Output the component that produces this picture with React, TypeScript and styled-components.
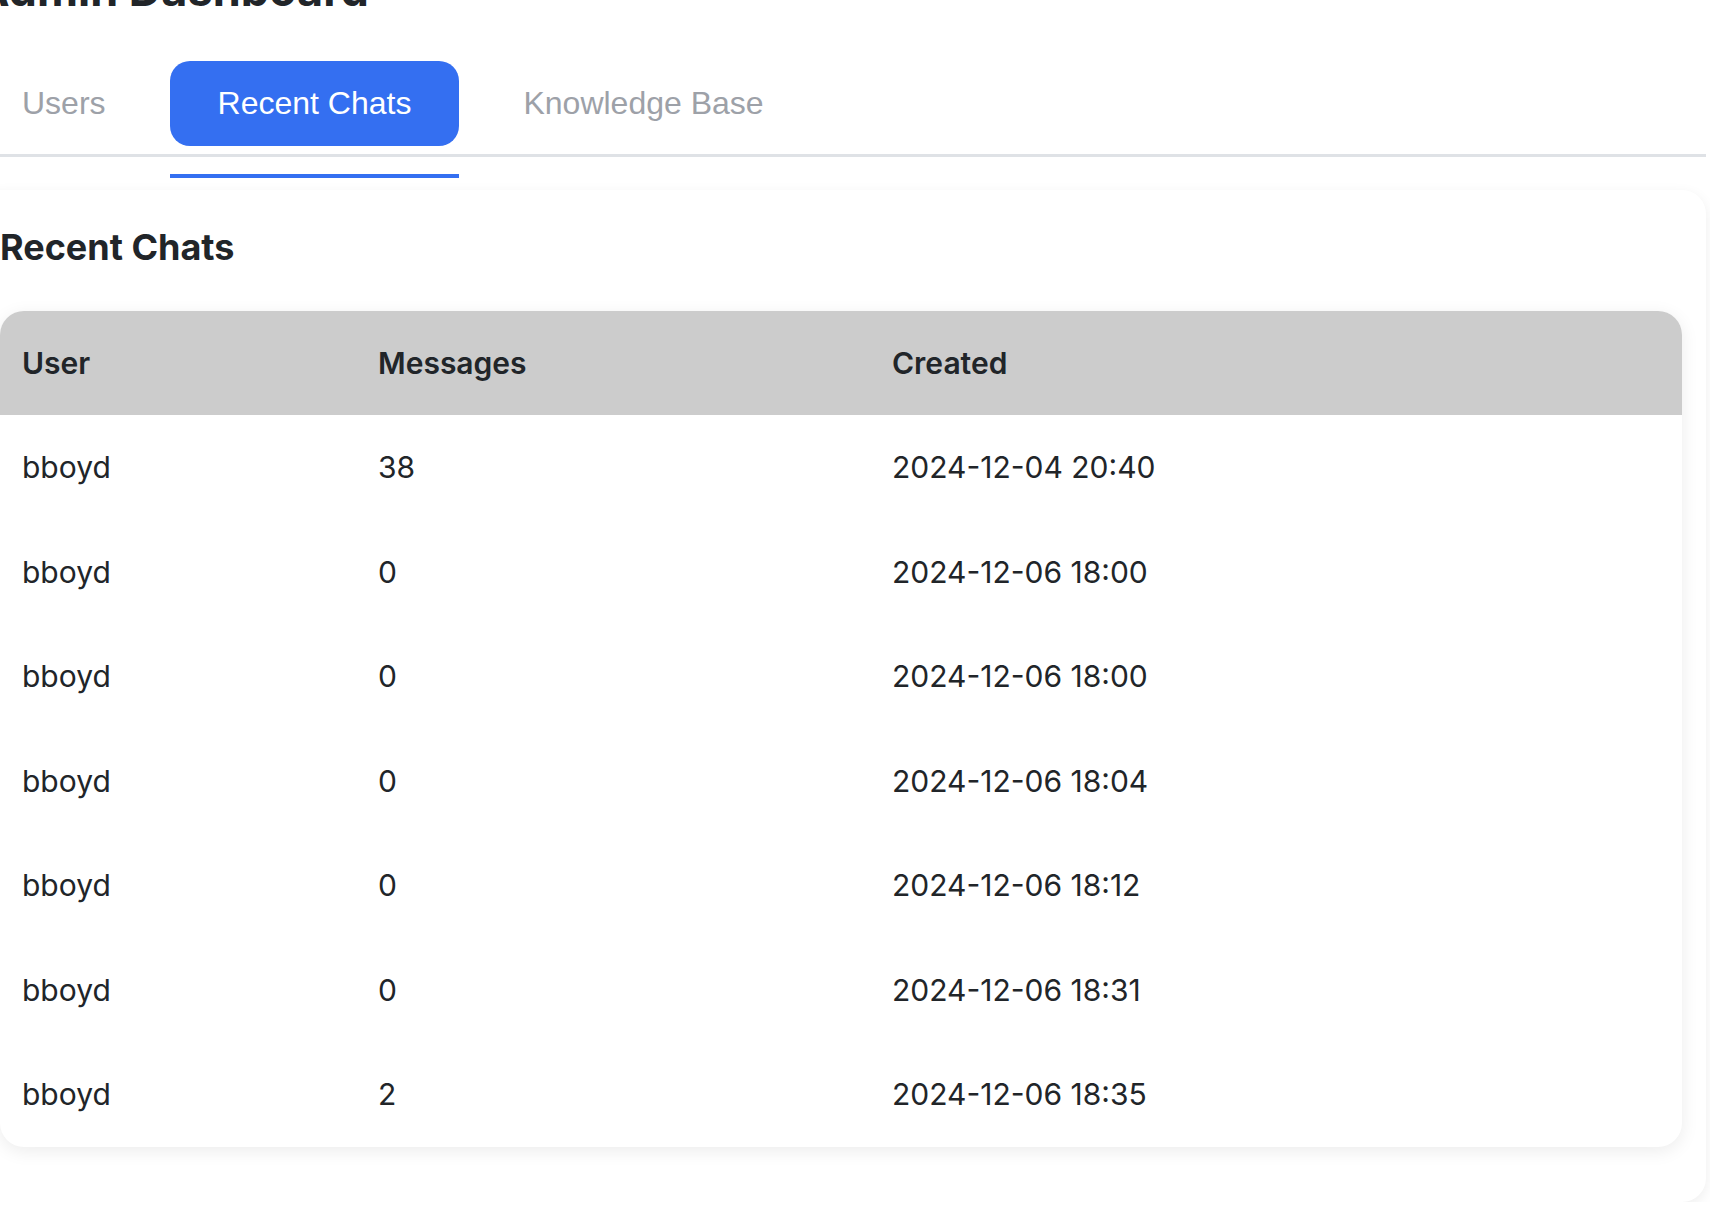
import React from "react";
import styled, { createGlobalStyle } from "styled-components";

const GlobalStyle = createGlobalStyle`
  html, body {
    margin: 0;
    padding: 0;
    background: #ffffff;
    overflow: hidden;
  }
  body {
    font-family: Inter, "Noto Sans", sans-serif;
    color: #212529;
  }
`;

const Page = styled.div`
  width: 1730px;
  margin-left: -24px;
  display: flex;
  flex-direction: column;
`;

const Title = styled.h1`
  margin: -37px 0 0 0;
  font-family: Inter, sans-serif;
  font-size: 45px;
  line-height: 54px;
  font-weight: 700;
  color: #212529;
`;

const TabList = styled.div`
  display: flex;
  gap: 16px;
  margin: 44px 0 0 -2px;
  padding-bottom: 8px;
  border-bottom: 3px solid #dfe2e6;
`;

const Tab = styled.button<{ $active?: boolean }>`
  position: relative;
  border: none;
  border-radius: 20px;
  padding: 24px 48px;
  height: 85px;
  font-family: "Liberation Sans", Arial, sans-serif;
  font-size: 32px;
  line-height: 37px;
  cursor: pointer;
  background: ${(p) => (p.$active ? "#346ff1" : "transparent")};
  color: ${(p) => (p.$active ? "#ffffff" : "#9da1a8")};

  &::after {
    content: "";
    display: ${(p) => (p.$active ? "block" : "none")};
    position: absolute;
    left: 0;
    right: 0;
    bottom: -32px;
    height: 4px;
    background: #346ff1;
  }
`;

const Card = styled.section`
  margin-top: 33px;
  background: #ffffff;
  border-radius: 24px;
  padding: 24px;
  height: 1012px;
  box-sizing: border-box;
  box-shadow: 0 4px 14px rgba(0, 0, 0, 0.07);
  display: flex;
  flex-direction: column;
`;

const CardTitle = styled.h2`
  margin: 12px 0 42px 0;
  font-family: Inter, sans-serif;
  font-size: 36px;
  line-height: 1.2;
  font-weight: 700;
  color: #212529;
`;

const Table = styled.table`
  width: 1682px;
  border-collapse: separate;
  border-spacing: 0;
  border-radius: 24px;
  overflow: hidden;
  background: #ffffff;
  box-shadow: 0 4px 18px rgba(0, 0, 0, 0.08);
  table-layout: fixed;
  font-family: Inter, sans-serif;
`;

const HeadCell = styled.th<{ $w: number }>`
  width: ${(p) => p.$w}px;
  height: 104px;
  padding: 0 22px;
  box-sizing: border-box;
  background: #cccccc;
  text-align: left;
  font-size: 30px;
  font-weight: 600;
  color: #212529;
`;

const Cell = styled.td`
  height: 104.5px;
  padding: 0 22px;
  box-sizing: border-box;
  font-size: 30px;
  font-weight: 400;
  color: #212529;
`;

const rows = [
  { user: "bboyd", messages: 38, created: "2024-12-04 20:40" },
  { user: "bboyd", messages: 0, created: "2024-12-06 18:00" },
  { user: "bboyd", messages: 0, created: "2024-12-06 18:00" },
  { user: "bboyd", messages: 0, created: "2024-12-06 18:04" },
  { user: "bboyd", messages: 0, created: "2024-12-06 18:12" },
  { user: "bboyd", messages: 0, created: "2024-12-06 18:31" },
  { user: "bboyd", messages: 2, created: "2024-12-06 18:35" },
];

export default function App() {
  return (
    <>
      <GlobalStyle />
      <Page>
        <Title>Admin Dashboard</Title>
        <TabList>
          <Tab>Users</Tab>
          <Tab $active>Recent Chats</Tab>
          <Tab>Knowledge Base</Tab>
        </TabList>
        <Card>
          <CardTitle>Recent Chats</CardTitle>
          <Table>
            <thead>
              <tr>
                <HeadCell $w={356}>User</HeadCell>
                <HeadCell $w={514}>Messages</HeadCell>
                <HeadCell $w={812}>Created</HeadCell>
              </tr>
            </thead>
            <tbody>
              {rows.map((r, i) => (
                <tr key={i}>
                  <Cell>{r.user}</Cell>
                  <Cell>{r.messages}</Cell>
                  <Cell>{r.created}</Cell>
                </tr>
              ))}
            </tbody>
          </Table>
        </Card>
      </Page>
    </>
  );
}
